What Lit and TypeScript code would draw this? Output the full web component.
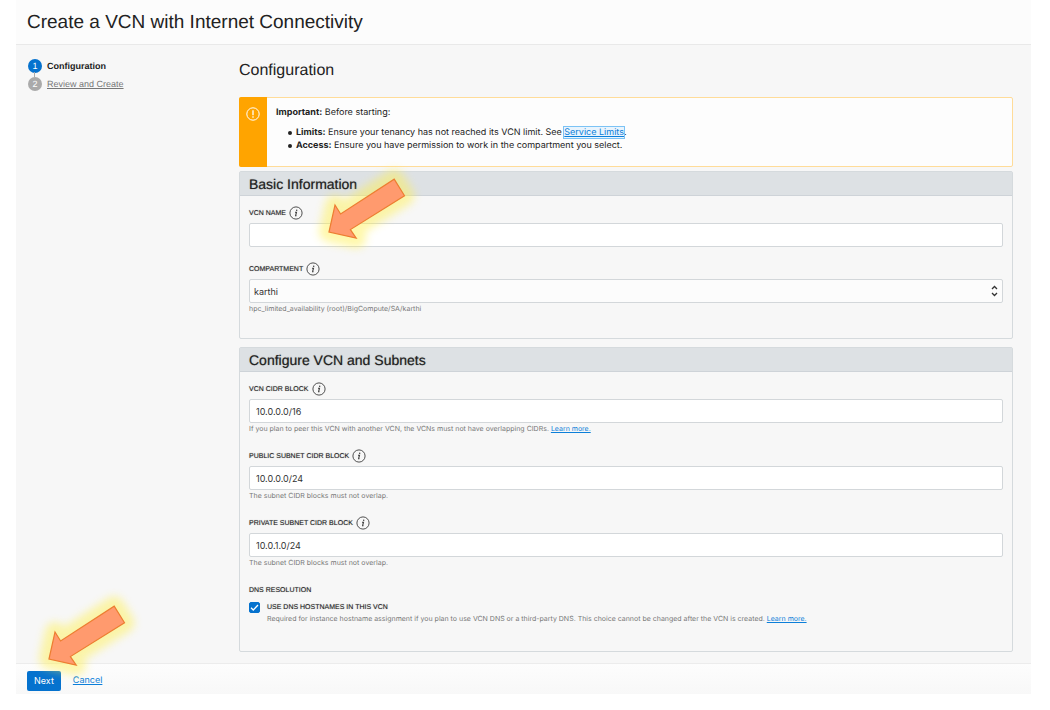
import { LitElement, html, css } from "lit";
import { customElement, property } from "lit/decorators.js";

@customElement("pointer-arrow")
class PointerArrow extends LitElement {
  static styles = css`
    :host { display: block; width: 110px; height: 96px; pointer-events: none; }
    svg { display: block; overflow: visible; }
    .glow { fill: #fff04a; stroke: #fff04a; stroke-width: 20; stroke-linejoin: round; opacity: 0.46; filter: blur(4px); }
    .shape { fill: #ff9a6e; stroke: #ed7d31; stroke-width: 1.2; stroke-linejoin: miter; }
  `;
  render() {
    const points = "20,75 26,48 31.6,57 85.2,22.2 95.5,38.7 41.4,72.6 47.2,81.2";
    return html`<svg width="110" height="96" viewBox="0 0 110 96" aria-hidden="true">
      <polygon class="glow" points=${points}></polygon>
      <polygon class="shape" points=${points}></polygon>
    </svg>`;
  }
}

@customElement("info-icon")
class InfoIcon extends LitElement {
  static styles = css`
    :host { display: block; width: 14px; height: 14px; }
    svg { display: block; }
  `;
  render() {
    return html`<svg width="14" height="14" viewBox="0 0 14 14" fill="none" stroke="#3c3c3c" aria-hidden="true">
      <circle cx="7" cy="7" r="6.1" stroke-width="0.9"></circle>
      <circle cx="7.7" cy="4.2" r="0.75" fill="#3c3c3c" stroke="none"></circle>
      <path d="M6 6.2h1.5L6.6 9.6q-.1.5.9 0" stroke-width="1.1"></path>
    </svg>`;
  }
}

@customElement("form-panel")
class FormPanel extends LitElement {
  @property() heading = "";
  static styles = css`
    :host { display: block; border: 1px solid #d5dadd; border-radius: 2px; }
    .heading {
      margin: 0; padding: 0 9px; height: 24px; box-sizing: border-box; line-height: 24px;
      font-family: "Liberation Sans", Arial, sans-serif; font-size: 14px; font-weight: 500;
      color: #222; background: #dde1e4; border-bottom: 1px solid #ced3d8; text-shadow: 0 0 1px #777;
    }
    .body { display: flex; flex-direction: column; gap: 14px; padding: 9px 9px 24px; }
  `;
  render() {
    return html`<h3 class="heading">${this.heading}</h3><div class="body"><slot></slot></div>`;
  }
}

@customElement("app-root")
class AppRoot extends LitElement {
  static styles = css`
    :host {
      display: block; background: #fff; padding: 0 19px 0 16px; color: #333;
      font-family: Inter, "Liberation Sans", Arial, sans-serif; font-size: 9px; text-rendering: geometricPrecision;
    }
    * { box-sizing: border-box; }
    a { color: #0c7fd9; }
    .frame { background: #f7f7f7; }
    .title, .section, .caption, .check label, .steps { font-family: "Liberation Sans", Arial, sans-serif; }
    .top { padding: 2px 11px 0; border-bottom: 1px solid #e9e9e9; background: #fcfcfc; }
    .title { margin: 0; font-size: 19px; line-height: 42px; font-weight: 400; color: #222; }
    .main { display: grid; grid-template-columns: 212px 1fr; padding: 14px 18px 11px 11px; }
    .steps { list-style: none; margin: 0; padding: 0; display: flex; flex-direction: column; gap: 4px; }
    .step { position: relative; display: flex; align-items: center; gap: 5px; height: 14px; margin-left: 1px; color: #222; }
    .step + .step::before { content: ""; position: absolute; left: 6px; top: -5px; width: 1px; height: 5px; background: #aaa; }
    .dot { width: 14px; height: 14px; border-radius: 50%; background: #aaa; color: #fff; line-height: 14px; text-align: center; }
    .dot.on { background: #0572ce; }
    .step a { color: #777; }
    .section { margin: 0 0 14px; font-size: 16px; line-height: 24px; font-weight: 400; color: #222; }
    .notice { display: grid; grid-template-columns: 27px 1fr; border: 1px solid #ffdc99; border-radius: 2px; background: #fdfdfd; color: #222; }
    .stripe { background: #ffa400; margin: -1px 0 -1px -1px; border-radius: 2px 0 0 2px; padding: 10px 0 0 7px; }
    .stripe svg { display: block; }
    .words { padding: 9px 9px 14px; line-height: 12px; }
    .words p { margin: 0 0 7px; }
    .words ul { margin: 0; padding: 0 0 0 12px; list-style: none; }
    .words li { display: flex; align-items: center; gap: 4px; line-height: 13px; }
    .words li::before { content: ""; width: 4px; height: 4px; border-radius: 50%; background: #222; }
    .focus { outline: 1px solid #7cc3f5; background: #e9f4fd; }
    .panels { display: flex; flex-direction: column; gap: 8px; margin-top: 4px; }
    .field { position: relative; display: flex; flex-direction: column; }
    .caption { display: flex; align-items: center; gap: 3px; height: 16px; margin-bottom: 2px; font-size: 7px; color: #222; text-shadow: 0 0 1px #999; }
    .box { width: 100%; height: 24px; padding: 0 6px; border: 1px solid #d3d7da; border-radius: 2px; background: #fff; font: inherit; color: #333; appearance: none; outline: none; }
    .pick { display: grid; align-items: center; }
    .pick > * { grid-area: 1 / 1; }
    .pick select { padding: 0 4px; background: #fcfcfc; }
    .pick svg { justify-self: end; margin-right: 5px; pointer-events: none; }
    .hint { margin: 0; font-size: 7px; line-height: 11px; color: #777; }
    .arrow { position: absolute; z-index: 2; left: 60px; top: -48px; }
    .dns { border: 0; margin: 0 0 3px; padding: 0; min-width: 0; }
    .dns legend { padding: 0; }
    .check { display: grid; grid-template-columns: 11px 1fr; column-gap: 7px; align-items: center; margin-top: 2px; }
    .check label { font-size: 7px; line-height: 11px; color: #222; text-shadow: 0 0 1px #999; }
    .check .hint { grid-column: 2; }
    .tick { appearance: none; margin: 0; width: 11px; height: 11px; border-radius: 2px; border: 1px solid #0572ce; background: #fff; grid-area: 1 / 1; }
    .tick:checked { background: #0572ce; }
    .mark { grid-area: 1 / 1; pointer-events: none; }
    .foot { position: relative; display: flex; align-items: center; gap: 12px; height: 31px; padding: 3px 11px 0; border-top: 1px solid #ececec; background: linear-gradient(#fdfdfd, #f8f8f8); }
    .next { height: 20px; padding: 0 7px; border: 0; border-radius: 2px; background: #0572ce; color: #fff; font: inherit; }
    .foot .arrow { left: 13px; top: -80px; }
    .tail { height: 16px; }
  `;

  field(id: string, label: string, value: string, hint: unknown, arrow = false) {
    return html`<div class="field">
      <label class="caption" for=${id}>${label}<info-icon></info-icon></label>
      <input class="box" id=${id} type="text" .value=${value} />
      ${hint ? html`<p class="hint">${hint}</p>` : ""}
      ${arrow ? html`<pointer-arrow class="arrow"></pointer-arrow>` : ""}
    </div>`;
  }

  render() {
    const more = html`<a href="#learn">Learn more.</a>`;
    return html`
      <div class="frame">
        <header class="top"><h1 class="title">Create a VCN with Internet Connectivity</h1></header>
        <div class="main">
          <ol class="steps">
            <li class="step"><span class="dot on">1</span><b>Configuration</b></li>
            <li class="step"><span class="dot">2</span><a href="#review">Review and Create</a></li>
          </ol>
          <main>
            <h2 class="section">Configuration</h2>
            <div class="notice">
              <div class="stripe">
                <svg width="14" height="14" viewBox="0 0 14 14" fill="none" stroke="#fff" aria-hidden="true">
                  <circle cx="7" cy="7" r="6.2"></circle>
                  <path d="M7 3.2v5M7 9.3v1.4" stroke-width="1.3"></path>
                </svg>
              </div>
              <div class="words">
                <p><b>Important:</b> Before starting:</p>
                <ul>
                  <li><span><b>Limits:</b> Ensure your tenancy has not reached its VCN limit. See <a class="focus" href="#limits">Service Limits</a>.</span></li>
                  <li><span><b>Access:</b> Ensure you have permission to work in the compartment you select.</span></li>
                </ul>
              </div>
            </div>
            <div class="panels">
              <form-panel heading="Basic Information">
                ${this.field("name", "VCN NAME", "", null, true)}
                <div class="field">
                  <label class="caption" for="compartment">COMPARTMENT<info-icon></info-icon></label>
                  <div class="pick">
                    <select class="box" id="compartment"><option>karthi</option></select>
                    <svg width="7" height="12" viewBox="0 0 7 12" fill="none" stroke="#333" stroke-width="1.3" aria-hidden="true">
                      <path d="M1 4 3.5 1.5 6 4M1 8l2.5 2.5L6 8"></path>
                    </svg>
                  </div>
                  <p class="hint">hpc_limited_availability (root)/BigCompute/SA/karthi</p>
                </div>
              </form-panel>
              <form-panel heading="Configure VCN and Subnets">
                ${this.field("vcn", "VCN CIDR BLOCK", "10.0.0.0/16", html`If you plan to peer this VCN with another VCN, the VCNs must not have overlapping CIDRs. ${more}`)}
                ${this.field("public", "PUBLIC SUBNET CIDR BLOCK", "10.0.0.0/24", "The subnet CIDR blocks must not overlap.")}
                ${this.field("private", "PRIVATE SUBNET CIDR BLOCK", "10.0.1.0/24", "The subnet CIDR blocks must not overlap.")}
                <fieldset class="dns">
                  <legend class="caption">DNS RESOLUTION</legend>
                  <div class="check">
                    <input class="tick" id="dns" type="checkbox" checked />
                    <svg class="mark" width="11" height="11" viewBox="0 0 11 11" fill="none" stroke="#fff" stroke-width="1.3" aria-hidden="true"><path d="M2 5.8 4.3 8 9 3"></path></svg>
                    <label for="dns">USE DNS HOSTNAMES IN THIS VCN</label>
                    <p class="hint">Required for instance hostname assignment if you plan to use VCN DNS or a third-party DNS. This choice cannot be changed after the VCN is created. ${more}</p>
                  </div>
                </fieldset>
              </form-panel>
            </div>
          </main>
        </div>
        <footer class="foot">
          <button class="next" type="button">Next</button>
          <a href="#cancel">Cancel</a>
          <pointer-arrow class="arrow"></pointer-arrow>
        </footer>
      </div>
      <div class="tail"></div>
    `;
  }
}
